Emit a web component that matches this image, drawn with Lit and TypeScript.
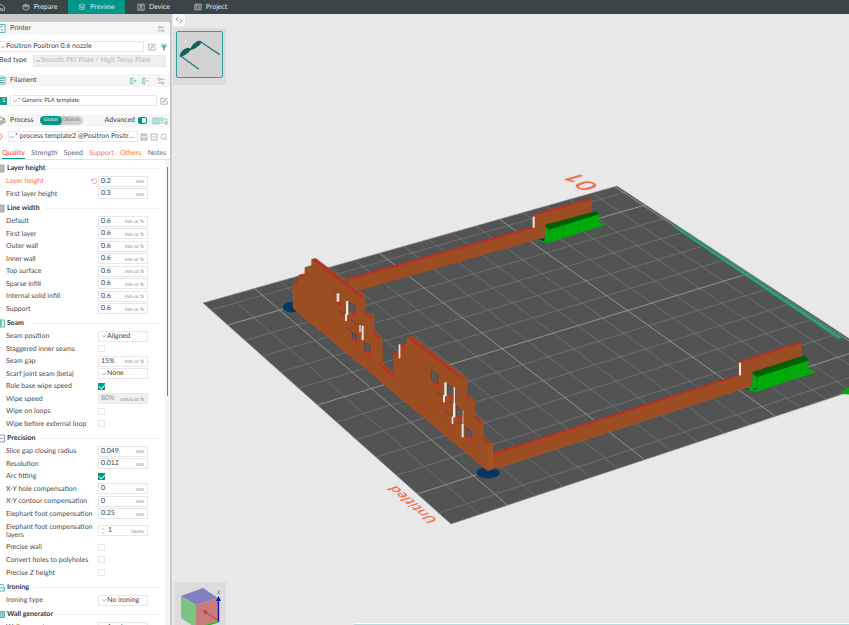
import { LitElement, html, css, svg, nothing } from "lit";
import { customElement, property, state } from "lit/decorators.js";
import { classMap } from "lit/directives/class-map.js";

type Kind = "text" | "select" | "check" | "spin";
interface Setting {
  label: string;
  kind: Kind;
  value?: string;
  unit?: string;
  on?: boolean;
  changed?: boolean;
  disabled?: boolean;
}
interface Group {
  title: string;
  icon: string;
  parts: Setting[][];
}

const num = (label: string, value: string, unit = "mm"): Setting => ({ label, kind: "text", value, unit });
const tick = (label: string, on = false): Setting => ({ label, kind: "check", on });
const pick = (label: string, value: string): Setting => ({ label, kind: "select", value });

const GROUPS: Group[] = [
  {
    title: "Layer height",
    icon: "block",
    parts: [[{ ...num("Layer height", "0.2"), changed: true }, num("First layer height", "0.3")]],
  },
  {
    title: "Line width",
    icon: "block",
    parts: [
      ["Default", "First layer", "Outer wall", "Inner wall", "Top surface", "Sparse infill", "Internal solid infill", "Support"].map(
        (l) => num(l, "0.6", "mm or %")
      ),
    ],
  },
  {
    title: "Seam",
    icon: "seam",
    parts: [
      [
        pick("Seam position", "Aligned"),
        tick("Staggered inner seams"),
        num("Seam gap", "15%", "mm or %"),
        pick("Scarf joint seam (beta)", "None"),
        tick("Role base wipe speed", true),
        { ...num("Wipe speed", "80%", "mm/s or %"), disabled: true },
        tick("Wipe on loops"),
        tick("Wipe before external loop"),
      ],
    ],
  },
  {
    title: "Precision",
    icon: "precision",
    parts: [
      [
        num("Slice gap closing radius", "0.049"),
        num("Resolution", "0.012"),
        tick("Arc fitting", true),
        num("X-Y hole compensation", "0"),
        num("X-Y contour compensation", "0"),
        num("Elephant foot compensation", "0.25"),
      ],
      [{ label: "Elephant foot compensation layers", kind: "spin", value: "1", unit: "layers" }],
      [tick("Precise wall"), tick("Convert holes to polyholes"), tick("Precise Z height")],
    ],
  },
  { title: "Ironing", icon: "iron", parts: [[pick("Ironing type", "No ironing")]] },
  { title: "Wall generator", icon: "wall", parts: [[pick("Wall generator", "Arachne")]] },
];

const chevron = html`<svg class="chev" viewBox="0 0 6 4" aria-hidden="true"><path d="M1 1.2 3 2.8 5 1.2" /></svg>`;

const icons = {
  home: svg`<path d="M-4 6 1.5 1.5 6.5 6M5.5 5.5V10H-3V5.5M0 10V7h3v3" />`,
  prepare: svg`<path d="M5 1.5 8.8 3.2 8.8 7 5 9 1.2 7 1.2 3.2ZM1.2 3.2 5 5 8.8 3.2M3 2.3 6.8 4" />`,
  preview: svg`<path d="M5 1 8.8 2.8 5 4.6 1.2 2.8ZM1.2 4.6 5 6.5 8.8 4.6M1.2 6.6 5 8.6 8.8 6.6" />`,
  device: svg`<path d="M1 1.5H9V9H1ZM3.5 3.2H6.5V5H3.5ZM5 5V6M2.5 7.5H7.5" />`,
  project: svg`<path d="M1 1.5H9V8.5H1ZM3.6 1.5V8.5M5.2 3.5H7.8M5.2 5H7.8M5.2 6.5H7.8M1.8 3.5H2.8M1.8 5H2.8" />`,
  sliders: svg`<path d="M4.5 2.8H9M1 7.2H5.5" /><circle cx="2.9" cy="2.8" r="1.4" /><circle cx="7.1" cy="7.2" r="1.4" />`,
  edit: svg`<path d="M9 4.5V9H1V1.5H6.5M3.5 6.8 4 5.2 8.3 1.2 9.2 2.2 5 6.2Z" />`,
  wifi: svg`<path d="M.6 3Q5-.8 9.400 3" /><path class="solid" d="M1.6 3.8Q5 1 8.400 3.800L6 6.500V9.500H4V6.500Z" />`,
  plus: svg`<path d="M6 1.5H2V8.5H6M3.8 1.5V8.5M5.5 5H9.5M7.5 3V7" />`,
  minus: svg`<path d="M6 1.5H2V8.5H6M3.8 1.5V8.5M5.5 5H9.5" />`,
  save: svg`<path d="M1.2 1.2H7.5L8.8 2.5V8.8H1.2ZM3 1.2V3.6H6.8V1.2M3 8.8V6H7V8.8" />`,
  remove: svg`<path d="M1.2 1.2H8.8V8.8H1.2ZM3 5H7" />`,
  search: svg`<circle cx="4.5" cy="4.5" r="3.2" /><path d="M6.8 6.8 9 9" />`,
  table: svg`<path d="M1 1.2H9V8.8H1ZM5 1.2V8.8M2.2 3.3H4M2.2 5H4M2.2 6.8H4M6.2 3.3H8M6.2 5H8M6.2 6.8H8" />`,
  swap: svg`<path d="M1 1.2H4V4.2H1ZM6 5.8H9V8.8H6ZM6 2.5H8.5V4.5M4 7.5H1.5V5.5" />`,
  reset: svg`<path d="M2 2.2V4.6H4.2M2.2 4.4A3.2 3.2 0 1 1 2.6 7.2" />`,
};
const icon = (name: keyof typeof icons, cls = "") =>
  html`<svg class="ico ${cls}" viewBox="0 0 10 10" aria-hidden="true">${icons[name]}</svg>`;

const shared = css`
  * {
    box-sizing: border-box;
  }
  button,
  input,
  select {
    font: inherit;
    color: inherit;
    border: 0;
    padding: 0;
    margin: 0;
    background: none;
    min-width: 0;
    text-rendering: inherit;
  }
  .ico {
    width: 8px;
    height: 8px;
    flex: none;
    fill: none;
    stroke: currentColor;
    stroke-width: 0.8;
    overflow: hidden;
  }
  .chev {
    width: 6px;
    height: 4px;
    flex: none;
    fill: none;
    stroke: #8c8c8c;
    stroke-width: 0.7;
  }
  .field {
    display: flex;
    align-items: center;
    border: 1px solid #e8e8e8;
    background: #fff;
  }
  select {
    appearance: none;
    outline: none;
  }
`;

@customElement("setting-row")
class SettingRow extends LitElement {
  @property({ attribute: false }) item!: Setting;

  static styles = [
    shared,
    css`
      :host {
        display: grid;
        grid-template-columns: 84px 8px 50px;
        align-items: center;
        padding-left: 6px;
      }
      .name {
        line-height: 8px;
        color: #4c4c4c;
        margin-right: -4px;
      }
      .changed,
      .undo {
        color: #ff6f43;
      }
      .undo {
        display: flex;
        width: 8px;
      }
      .field {
        height: 11px;
        padding: 0 3px 0 2px;
      }
      .field input {
        flex: 1;
        width: 10px;
      }
      .field select {
        flex: 1;
      }
      .unit {
        font-size: 5px;
        color: #858585;
        padding-top: 2px;
        line-height: 8px;
      }
      .off {
        background: #f0f0f0;
        color: #909090;
      }
      .box {
        appearance: none;
        display: block;
        width: 7px;
        height: 7px;
        border: 1px solid #e6e6e6;
        background: #fff;
      }
      .box:checked {
        border-color: #009688;
        background: #009688;
      }
      .box:checked::before {
        content: "";
        display: block;
        width: 5px;
        height: 3px;
        border: solid #d8f0ee;
        border-width: 0 0 1px 1px;
        transform: rotate(-45deg);
      }
      .spin {
        width: 4px;
        height: 8px;
        margin-right: 3px;
        fill: none;
        stroke: #b0b0b0;
        stroke-width: 0.6;
      }
    `,
  ];

  private control(s: Setting) {
    if (s.kind === "check") return html`<input id="c" class="box" type="checkbox" .checked=${!!s.on} />`;
    if (s.kind === "select")
      return html`<div class="field">
        ${chevron}<select id="c"><option>${s.value}</option></select>
      </div>`;
    return html`<div class=${classMap({ field: true, off: !!s.disabled })}>
      ${s.kind === "spin"
        ? html`<svg class="spin" viewBox="0 0 4 8" aria-hidden="true"><path d="M.5 3 2 1 3.5 3M.5 5 2 7 3.5 5" /></svg>`
        : nothing}
      <input id="c" .value=${s.value ?? ""} ?disabled=${s.disabled} />
      <span class="unit">${s.unit}</span>
    </div>`;
  }

  render() {
    const s = this.item;
    return html`<label for="c" class=${classMap({ name: true, changed: !!s.changed })}>${s.label}</label>
      <span>${s.changed ? html`<button class="undo" aria-label="Reset value">${icon("reset")}</button>` : nothing}</span>
      ${this.control(s)}`;
  }
}

@customElement("settings-panel")
class SettingsPanel extends LitElement {
  @state() private tab = "Quality";

  static styles = [
    shared,
    css`
      :host {
        display: flex;
        flex-direction: column;
        min-height: 0;
        background: #fff;
        color: #3f3f3f;
      }
      .strip {
        height: 8px;
        flex: none;
        background: #c9c9c9;
      }
      .head {
        display: flex;
        align-items: center;
        gap: 4px;
        height: 13px;
        flex: none;
        padding-right: 5px;
        background: #f6f6f6;
      }
      .edge {
        width: 6px;
        height: 9px;
        flex: none;
        fill: none;
        stroke: #5eb5ad;
        stroke-width: 1;
      }
      .edge .fill {
        fill: #8ecdc7;
      }
      .edge .grey {
        fill: #b4b8bb;
        stroke: #a2a6a9;
      }
      .edge.warn {
        stroke: #ff8a50;
      }
      .grow {
        flex: 1;
      }
      .row {
        display: flex;
        align-items: center;
        flex: none;
        height: 13px;
        gap: 4px;
        padding-right: 2px;
      }
      .printer {
        margin-top: 5px;
      }
      .bed {
        padding-right: 4px;
        gap: 6px;
        margin-bottom: 7px;
        margin-top: 1px;
      }
      .bed label {
        margin-left: -1px;
      }
      .stock {
        margin: 7px 0;
        gap: 3px;
      }
      .row .field {
        flex: 1;
        height: 11px;
        min-width: 0;
      }
      .row .field select {
        flex: 1;
        text-overflow: ellipsis;
      }
      .row .bare {
        border-left: 0;
      }
      .bed .field {
        height: 12px;
        padding-left: 1px;
        background: #efefef;
        color: #b9b9b9;
      }
      .bed select {
        opacity: 1;
      }
      .stock .field {
        padding-left: 1px;
      }
      .swatch {
        width: 7px;
        height: 8px;
        background: #179a8d;
        color: #fff;
        font-size: 6px;
        line-height: 8px;
        padding-left: 2px;
      }
      .small {
        font-size: 6px;
      }
      .grey {
        color: #8d8d8d;
      }
      .teal {
        color: #4fb3aa;
      }
      .ico .solid {
        fill: currentColor;
        stroke: none;
      }
      .toggle {
        display: flex;
        height: 9px;
        margin-left: 2px;
        border-radius: 5px;
        background: #cfd1d1;
        font-size: 5px;
        color: #777;
      }
      .toggle button {
        padding: 0 3px 0 1px;
      }
      .toggle .sel {
        background: #009688;
        color: #e8f6f4;
        border-radius: 5px;
        padding: 0 4px;
      }
      .adv {
        display: flex;
        align-items: center;
        gap: 3px;
      }
      .switch {
        appearance: none;
        display: flex;
        justify-content: flex-end;
        width: 9px;
        height: 7px;
        padding: 1px;
        border-radius: 2px;
        background: #009688;
      }
      .switch::before {
        content: "";
        width: 4px;
        border-radius: 1px;
        background: #e9f7f5;
      }
      .icons {
        display: flex;
        margin: 0 -3px 0 1px;
      }
      .preset {
        margin: 3px 0;
        gap: 2px;
      }
      .tabs {
        display: flex;
        flex: none;
        height: 14px;
        justify-content: space-between;
        padding: 0 4px 0 2px;
        border-bottom: 1px solid #e3e3e3;
      }
      .tabs button {
        color: #6b6b6b;
        padding-top: 2px;
        border-bottom: 1px solid transparent;
      }
      .tabs .changed {
        color: #ff6f43;
      }
      .tabs .sel {
        font-weight: 700;
        border-bottom-color: #009688;
      }
      .pane {
        flex: 1;
        min-height: 0;
        display: flex;
        overflow: hidden;
      }
      .list {
        flex: 1;
      }
      .gutter {
        width: 5px;
        padding: 7px 2px 0;
        background: #f5f5f5;
      }
      .thumb {
        width: 1px;
        height: 50%;
        background: #7e7e7e;
      }
      h2 {
        display: flex;
        align-items: center;
        height: 15px;
        margin: 0;
        gap: 1px;
        padding: 2px 5px 0 0;
        font-size: 7px;
        font-weight: 700;
        color: #333;
      }
      h2::after {
        content: "";
        flex: 1;
        margin-left: 4px;
        border-top: 1px solid #f0f0f0;
      }
      .part {
        display: grid;
        grid-auto-rows: 1fr;
      }
      .n1 {
        height: 12px;
      }
      .n2 {
        height: 25px;
      }
      .n3 {
        height: 38px;
      }
      .n6 {
        height: 75px;
      }
      .n8 {
        height: 100px;
      }
      .tall {
        height: 21px;
      }
    `,
  ];

  private edge(kind: string) {
    const art: Record<string, unknown> = {
      printer: svg`<path d="M-3 .5H5V8.5H-3M0 3A2 2 0 0 1 3 3M1 6H3" />`,
      spool: svg`<path d="M-3 1H5V8H-3M0 2.5H4M0 4.5H4M0 6.5H4" />`,
      layers: svg`<path stroke="#8d8d8d" d="M0 1 5 3 0 5.5M5.5 4.5 0 7 M5.5 6 0 8.5" />`,
      dot: svg`<path d="M-1 1.5A3 3 0 0 1-1 7.5" />`,
      block: svg`<path class="grey" d="M-1 1H4V8H-1Z" />`,
      seam: svg`<path class="fill" d="M-1 1H1V8H-1Z" /><path d="M1 1H4.5V8H1Z" />`,
      precision: svg`<path stroke="#8b9ea0" d="M-1 1H4.5V8H-1M0 4.5H3" />`,
      iron: svg`<path d="M-1 1.5H3L4.5 5V8H-1M0 5H4" />`,
      wall: svg`<path class="fill" d="M-1 1.5H4.5V7.5H-1Z" />`,
    };
    return html`<svg class="edge ${kind === "dot" ? "warn" : ""}" viewBox="0 0 6 9" aria-hidden="true">${art[kind]}</svg>`;
  }

  render() {
    const tabs = ["Quality", "Strength", "Speed", "Support", "Others", "Notes"];
    const changed = ["Quality", "Support", "Others"];
    return html`
      <div class="strip"></div>
      <div class="head">
        ${this.edge("printer")}<span>Printer</span><span class="grow"></span>${icon("sliders", "grey")}
      </div>
      <div class="row printer">
        <div class="field bare">
          ${chevron}<select aria-label="Printer preset"><option>Positron Positron 0.6 nozzle</option></select>
        </div>
        ${icon("edit", "grey")}${icon("wifi", "teal")}
      </div>
      <div class="row bed">
        <label for="bed">Bed type</label>
        <div class="field">
          ${chevron}<select id="bed" disabled><option>Smooth PEI Plate / High Temp Plate</option></select>
        </div>
      </div>
      <div class="head">
        ${this.edge("spool")}<span>Filament</span><span class="grow"></span>
        ${icon("plus", "teal")}${icon("minus", "teal")}<span></span>${icon("sliders", "grey")}
      </div>
      <div class="row stock">
        <span class="swatch">1</span>
        <div class="field small">
          ${chevron}<select aria-label="Filament preset"><option>* Generic PLA template</option></select>
        </div>
        ${icon("edit", "grey")}
      </div>
      <div class="head">
        ${this.edge("layers")}<span>Process</span>
        <div class="toggle"><button class="sel">Global</button><button>Objects</button></div>
        <span class="grow"></span>
        <label class="adv">Advanced <input class="switch" type="checkbox" role="switch" checked /></label>
        <span class="icons">${icon("table", "teal")}${icon("swap", "teal")}</span>
      </div>
      <div class="row preset">
        ${this.edge("dot")}
        <div class="field">
          ${chevron}<select aria-label="Process preset"><option>* process template2 @Positron Positro...</option></select>
        </div>
        ${icon("save", "grey")}${icon("remove", "grey")}${icon("search", "grey")}
      </div>
      <div class="tabs" role="tablist">
        ${tabs.map(
          (t) => html`<button
            role="tab"
            aria-selected=${t === this.tab}
            class=${classMap({ sel: t === this.tab, changed: changed.includes(t) })}
            @click=${() => (this.tab = t)}
          >
            ${t}
          </button>`
        )}
      </div>
      <div class="pane">
        <div class="list">
          ${GROUPS.map(
            (g) => html`<h2>${this.edge(g.icon)}${g.title}</h2>
              ${g.parts.map(
                (p) => html`<div class="part ${p[0].kind === "spin" ? "tall" : `n${p.length}`}">
                  ${p.map((s) => html`<setting-row .item=${s}></setting-row>`)}
                </div>`
              )}`
          )}
        </div>
        <div class="gutter"><div class="thumb"></div></div>
      </div>
    `;
  }
}

/* Perspective map from the unit square to the plate's four corners. */
const PLATE = [
  [203, 303],
  [617, 186],
  [903, 374],
  [451, 524],
];
function project(s: number, t: number): string {
  const [[x0, y0], [x1, y1], [x2, y2], [x3, y3]] = PLATE;
  const sx = x0 - x1 + x2 - x3;
  const sy = y0 - y1 + y2 - y3;
  const ax = x1 - x2;
  const ay = y1 - y2;
  const bx = x3 - x2;
  const by = y3 - y2;
  const det = ax * by - bx * ay;
  const g = (sx * by - bx * sy) / det;
  const h = (ax * sy - sx * ay) / det;
  const w = 1 + g * s + h * t;
  const x = (x0 + (x1 - x0 + g * x1) * s + (x3 - x0 + h * x3) * t) / w;
  const y = (y0 + (y1 - y0 + g * y1) * s + (y3 - y0 + h * y3) * t) / w;
  return `${x.toFixed(2)} ${y.toFixed(2)}`;
}
function gridPath(major: boolean): string {
  let d = "";
  for (let u = -1; u <= 15; u++)
    if ((u % 5 === 0) === major) d += `M${project((u + 2) / 17.1, 0)}L${project((u + 2) / 17.1, 1)}`;
  for (let v = -1; v <= 11; v++)
    if ((v % 5 === 0) === major) d += `M${project(0, (v + 1.47) / 13.04)}L${project(1, (v + 1.47) / 13.04)}`;
  return d;
}

@customElement("plate-view")
class PlateView extends LitElement {
  static styles = [
    shared,
    css`
      :host {
        display: block;
        position: relative;
        overflow: hidden;
        background: #e8e8e8;
      }
      .scene {
        display: block;
        width: 100%;
        height: 100%;
      }
      .minor {
        fill: none;
        stroke: #7d7f7f;
        stroke-width: 0.6;
      }
      .major {
        fill: none;
        stroke: #a3a5a5;
        stroke-width: 0.8;
      }
      .plate {
        fill: #525453;
        stroke: #8c8e8e;
        stroke-width: 0.6;
      }
      .body {
        fill: #9c4d22;
      }
      .side {
        fill: #a65323;
      }
      .top {
        fill: none;
        stroke: #b92e28;
        stroke-width: 6;
      }
      .red {
        fill: #c8302a;
      }
      .rim {
        fill: none;
        stroke: #a65020;
        stroke-width: 3;
      }
      .gap {
        fill: #565a56;
        stroke: #4a3560;
        stroke-width: 2;
      }
      .slit {
        fill: none;
        stroke: #4a3560;
        stroke-width: 2;
      }
      .white {
        fill: #ece6e2;
      }
      .brim {
        fill: #063a66;
      }
      .ring {
        fill: none;
        stroke: #0a2746;
        stroke-width: 2;
      }
      .lime {
        fill: #00ab0a;
      }
      .moss {
        fill: #035f06;
      }
      .seamline {
        fill: none;
        stroke: #068a0c;
        stroke-width: 2;
      }
      .tag {
        fill: #f2704f;
        font-family: "Open Sans", sans-serif;
        font-weight: 600;
      }
      .name {
        font-size: 14px;
      }
      .index {
        font-size: 24px;
      }
      .collapse {
        position: absolute;
        left: 1px;
        top: 0;
        width: 12px;
        height: 12px;
        display: grid;
        place-items: center;
        background: #f8f8f8;
        color: #555;
      }
      .plates {
        position: absolute;
        left: 1px;
        top: 14px;
        padding: 3px;
        background: #dcdcdc;
      }
      .plates button {
        display: block;
        width: 47px;
        height: 47px;
        border: 1px solid #2aa196;
        border-radius: 2px;
        background: #d2d2d2;
        margin-bottom: 4px;
      }
      .plates svg {
        display: block;
        width: 45px;
        height: 45px;
      }
      .cube {
        position: absolute;
        left: 2px;
        bottom: 0;
        width: 52px;
        height: 43px;
        background: #dcdcdc;
      }
      .axis {
        font-family: "Liberation Sans", sans-serif;
        font-size: 6px;
        fill: #5c5ca8;
      }
      .slider {
        position: absolute;
        left: 182px;
        right: 0;
        bottom: 0;
        height: 2px;
        background: #b5dcdd;
        border-top: 1px solid #fff;
      }
    `,
  ];

  private wall() {
    const gaps = ["236,186 254,197 254,226 236,214", "247,278 259,286 259,306 247,298", "284,306 300,317 300,340 284,330", "484,390 503,404 503,434 484,420", "531,432 550,446 550,474 531,460", "560,500 577,513 577,540 560,527", "588,562 603,573 603,600 588,588"];
    const ledges = [[194, 183], [238, 216], [218, 236], [262, 276], [242, 298], [286, 336], [486, 428], [534, 464], [513, 484], [560, 526], [536, 548], [588, 590]];
    const bars = [[200, 160, 8, 25], [228, 183, 7, 42], [225, 222, 6, 21], [268, 255, 4, 22], [275, 257, 6, 43], [386, 313, 5, 42], [523, 427, 7, 42], [519, 465, 6, 22], [549, 490, 7, 42], [551, 442, 4, 50], [545, 530, 5, 22], [575, 552, 6, 40], [578, 512, 2, 40]];
    return svg`
      <polygon class="body" points="70,128 84,121 84,106 104,100 104,82 124,76 124,58 137,54 287,168 287,216 312,224 314,276 336,288 339,366 371,400 371,340 389,332 389,314 410,312 410,292 427,287 592,416 592,464 616,479 617,530 641,543 642,590 669,610 669,640 665,690 652,692 70,206" />
      <polygon class="body" points="660,640 725,620 725,666 660,690" />
      <polygon class="side" points="652,620 669,610 669,688 652,692" />
      <path class="rim" d="M72 205 652 690M70 128V204" />
      <path class="top" d="M130 58 278 172M282 219 305 233M308 278 330 294M330 374 369 406M416 291 582 419M586 467 608 482M610 531 633 547M636 594 660 608M74 126 86 132M90 105 102 112M394 313 408 324M372 338 386 348M669 642 726 623" />
      ${gaps.map((p) => svg`<polygon class="gap" points=${p} />`)}
      ${ledges.map(([x, y]) => svg`<path class="red" d="M${x} ${y}l8 -2 12 9 -2 9z" />`)}
      <path class="slit" d="M190 150 208 162V194M205 210 226 226M244 240 276 262M232 262 250 280M500 454 520 470M536 482 560 500M526 510 546 530M564 546 588 564" />
      ${bars.map(([x, y, w, h]) => svg`<rect class="white" x=${x} y=${y} width=${w} height=${h} />`)}`;
  }

  render() {
    return html`
      <svg class="scene" viewBox="172 14 677 611" preserveAspectRatio="xMinYMin slice" role="img" aria-label="Plate preview">
        <path class="plate" d="M${PLATE.map((p) => p.join(" ")).join("L")}Z" />
        <path class="minor" d=${gridPath(false)} />
        <path class="major" d=${gridPath(true)} />
        <text class="tag name" transform="matrix(-.76 -.65 .95 -.31 438 521)">Untitled</text>
        <text class="tag index" transform="matrix(-.84 -.55 .96 -.28 600 187)">01</text>
        <g transform="translate(500 180) scale(.33333)">
          <path fill="#3f9d79" d="M516 138 538 141 1030 470 1014 478Z" />
          <path fill="none" stroke="#216a50" stroke-width="2" d="M526 137 1028 473M520 143 1014 475" />
          <path class="lime" d="M1018 641 1047 622 1060 645Z" />
          <path class="body" d="M-465 300 0 168 98 142V105L275 55V97L135 137V172L0 211-420 331Z" />
          <path class="top" d="M-465 300 0 170 98 143M100 105 272 57" />
          <path class="white" d="M98 110H104V143H98Z" />
          <path class="lime" d="M137 145 297 103V127L316 135 140 190 116 180 137 172Z" />
          <path class="moss" d="M135 134 288 93 297 103 146 150Z" />
          <path class="seamline" d="M146 150V182M188 140V174M236 130V162" />
          <path class="brim" d="M116 178 135 174 132 184Z" />
          <path class="body" d="M-50 830 0 815 715 585V547L905 485V528L757 577V618L0 863-50 880Z" />
          <path class="top" d="M-20 821 715 586M715 547 903 487" />
          <path class="white" d="M717 548H723V586H717Z" />
          <path class="lime" d="M757 590 925 542V566L950 575 765 637 734 626 757 618Z" />
          <path class="moss" d="M755 577 915 526 928 541 770 592Z" />
          <path class="seamline" d="M770 592V622M858 566V598M904 552V580" />
          <path class="brim" d="M732 626 748 624 744 630ZM756 628 774 622 766 630Z" />
        </g>
        <g transform="translate(270 240) scale(.33333)">
          <ellipse class="brim" cx="66" cy="201" rx="28" ry="16" />
          <path class="ring" d="M56 198q8 14 24 8" />
          <ellipse class="brim" cx="654" cy="698" rx="35" ry="17" />
          <path class="ring" d="M632 696q20 20 44 0M640 694q14 12 28 0" />
          ${this.wall()}
        </g>
      </svg>

      <button class="collapse" aria-label="Collapse sidebar">
        <svg class="ico" viewBox="0 0 10 10"><path d="M4 1.5 1.5 4 4 6.5M6 4 8.5 6.5 6 9" /></svg>
      </button>
      <div class="plates">
        <button aria-label="Plate 1">
          <svg viewBox="0 0 135 135">
            <path fill="#12605c" d="M8 74Q10 54 30 48 40 46 41 53 34 66 10 75ZM40 52Q46 34 62 27 74 24 74 31 66 46 41 55Z" />
            <path fill="none" stroke="#2b7a72" stroke-width="4" d="M72 30 128 68M11 72 66 112" />
            <path stroke="#fff" stroke-width="2" d="M25 22V32" />
          </svg>
        </button>
      </div>
      <svg class="cube" viewBox="0 0 52 43" aria-label="View orientation">
        <path fill="#8080c0" d="M7 14 29 6 44 16 22 23Z" />
        <path fill="#7cc484" d="M7 14 22 23V46L7 36Z" />
        <path fill="#c87c7c" d="M22 23 44 16V39L22 46Z" />
        <path fill="none" stroke="#c83c3c" d="M44 38 31 30" />
        <path fill="#c83c3c" d="M29 28 34 29 31 33Z" />
        <path stroke="#1414b4" stroke-width="1.4" d="M44.500 40V18" />
        <path fill="#1414b4" d="M42 19 44.500 14 47 19Z" />
        <path stroke="#18c018" stroke-width="1.6" d="M44 40 30 44" />
        <text class="axis" x="43" y="12">z</text>
      </svg>
      <div class="slider"></div>
    `;
  }
}

@customElement("app-root")
class AppRoot extends LitElement {
  @state() private page = "Preview";

  static styles = [
    shared,
    css`
      :host {
        display: flex;
        flex-direction: column;
        height: 100vh;
        font-family: Lato, "Open Sans", sans-serif;
        font-size: 7px;
        line-height: 9px;
        text-rendering: geometricPrecision;
      }
      nav {
        display: flex;
        flex: none;
        height: 14px;
        background: #3b4446;
        color: #e2e4e4;
      }
      nav button {
        width: 57px;
        display: flex;
        align-items: center;
        justify-content: center;
        gap: 4px;
      }
      nav .home {
        width: 11px;
        justify-content: flex-start;
      }
      nav .sel {
        background: #009688;
      }
      main {
        flex: 1;
        min-height: 0;
        display: grid;
        grid-template-columns: 170px 2px 1fr;
      }
      .shade {
        background: linear-gradient(90deg, #bdbdbd, #d4d4d4);
      }
    `,
  ];

  render() {
    const pages = ["Prepare", "Preview", "Device", "Project"];
    return html`
      <nav>
        <button class="home" aria-label="Home">${icon("home")}</button>
        ${pages.map(
          (p) => html`<button class=${classMap({ sel: p === this.page })} @click=${() => (this.page = p)}>
            ${icon(p.toLowerCase() as keyof typeof icons)}${p}
          </button>`
        )}
      </nav>
      <main>
        <settings-panel></settings-panel>
        <div class="shade"></div>
        <plate-view></plate-view>
      </main>
    `;
  }
}
